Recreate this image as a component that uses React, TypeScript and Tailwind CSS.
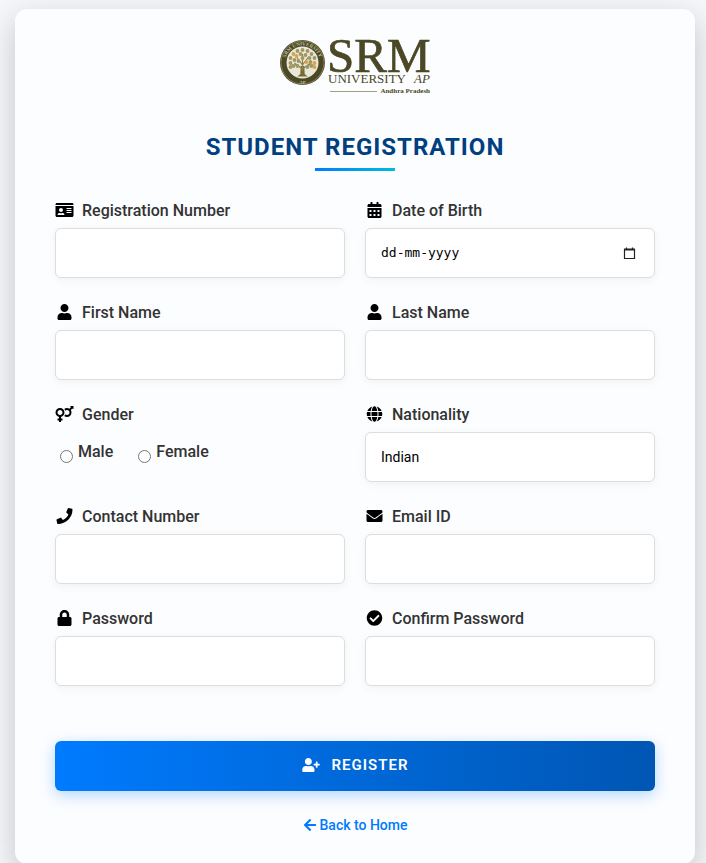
import { useId, type ComponentType, type InputHTMLAttributes } from "react";
import {
  FaArrowLeft,
  FaCalendarAlt,
  FaCheckCircle,
  FaEnvelope,
  FaGlobe,
  FaIdCard,
  FaLock,
  FaPhone,
  FaUser,
  FaUserPlus,
  FaVenusMars,
} from "react-icons/fa";

type Icon = ComponentType<{ className?: string }>;

const inputClass =
  "block h-[50px] w-full rounded-md border border-[#dddddd] bg-white px-[15px] text-sm font-normal text-black shadow-[0_2px_10px_rgba(0,0,0,0.05)] outline-none focus:border-[#007bff]";

const leaves = [
  [0, -13], [-5, -12], [5, -12], [-9, -9], [9, -9], [-12, -5], [12, -5], [-12, 0], [12, 0],
  [-9, 3], [9, 3], [-2, -9], [3, -8], [-6, -7], [7, -5], [-8, -3], [0, -5], [-4, -2], [4, -1],
  [8, -1], [-5, 3], [5, 4], [-12, 4], [12, 4],
];

function Logo() {
  return (
    <svg
      viewBox="0 0 152 60"
      className="h-[60px] w-[152px] overflow-visible"
      role="img"
      aria-label="SRM University AP, Andhra Pradesh"
    >
      <defs>
        <path id="seal-top" d="M5.5 26a17.5 17.5 0 0 1 35 0" />
      </defs>
      <circle cx="23.500" cy="24.500" r="22.500" fill="#4b4826" />
      <circle cx="23.500" cy="24.500" r="21.500" fill="none" stroke="#b9b38c" strokeWidth="0.500" />
      <circle cx="23.500" cy="24.500" r="16" fill="#e9e7d8" />
      <g transform="translate(.5 -1)" fill="#c5c09e" fontFamily="Liberation Serif, serif" fontWeight="700" fontSize="5">
        <text>
          <textPath href="#seal-top" startOffset="50%" textAnchor="middle">SRM UNIVERSITY</textPath>
        </text>
        <text x="23" y="46.500" textAnchor="middle">AP</text>
      </g>
      <g transform="translate(23.5 25)">
        <path d="M-1.800 3h3.600l.4 8 3 2.500h-10.400l3-2.500z" fill="#766b35" />
        <path d="M0 8V-9M0 6l-8-6M0 6l8-6M0 2l-6-8M0 2l6-8M-5 2h-6M5 2h6" fill="none" stroke="#8d8148" strokeWidth="1.200" />
        {leaves.map(([x, y], i) => (
          <circle key={i} cx={x} cy={y} r="1.900" fill={i % 5 === 3 ? "#d9a350" : "#a09863"} />
        ))}
      </g>
      <g fill="#4b4826" fontFamily="Liberation Serif, serif">
        <text x="48" y="34" fontSize="49" stroke="#4b4826" strokeWidth="0.700">SRM</text>
        <text x="49" y="45" fontSize="13">UNIVERSITY</text>
        <text x="151" y="45" fontSize="13" fontStyle="italic" textAnchor="end">AP</text>
        <text x="151" y="55" fontSize="7" fontWeight="700" textAnchor="end">Andhra Pradesh</text>
      </g>
      <path d="M51 53.500h47" stroke="#a09e88" strokeWidth="1" />
    </svg>
  );
}

function FieldCaption({ icon: Glyph, text }: { icon: Icon; text: string }) {
  return (
    <>
      <span className="mr-2 flex pb-0.5 text-black">
        <Glyph className="h-4 w-[19px]" />
      </span>
      {text}
    </>
  );
}

interface FieldProps extends InputHTMLAttributes<HTMLInputElement> {
  label: string;
  icon: Icon;
}

function Field({ label, icon, ...input }: FieldProps) {
  const id = useId();
  return (
    <div>
      <label htmlFor={id} className="mb-[5px] flex items-center leading-6">
        <FieldCaption icon={icon} text={label} />
      </label>
      <input id={id} className={inputClass} {...input} />
    </div>
  );
}

function DateField() {
  const id = useId();
  return (
    <div>
      <label htmlFor={id} className="mb-[5px] flex items-center leading-6">
        <FieldCaption icon={FaCalendarAlt} text="Date of Birth" />
      </label>
      <div className="flex h-[50px] items-center rounded-md border border-[#dddddd] bg-white px-[15px] shadow-[0_2px_10px_rgba(0,0,0,0.05)] focus-within:border-[#007bff]">
        <input
          id={id}
          type="text"
          placeholder="dd-mm-yyyy"
          className="min-w-0 flex-1 font-['DejaVu_Sans_Mono',monospace] text-[13px] font-normal text-black outline-none placeholder:text-black"
        />
        <button type="button" aria-label="Open calendar" className="mr-[3px]">
          <svg viewBox="0 0 13 13" className="size-[13px]" fill="none" stroke="#222222">
            <path d="M1.500 2.500h10v9h-10z" strokeWidth="1.200" />
            <path d="M1 2.500h11" strokeWidth="2" />
            <path d="M3.500 .5v2M9.500 .5v2" strokeWidth="1.200" />
          </svg>
        </button>
      </div>
    </div>
  );
}

function GenderField() {
  return (
    <fieldset>
      <legend className="mb-[5px] flex items-center leading-6">
        <FieldCaption icon={FaVenusMars} text="Gender" />
      </legend>
      <div className="flex gap-[25px] pt-2 pl-[5px]">
        {["Male", "Female"].map((name) => (
          <label key={name} className="flex items-start gap-[5px] leading-6">
            <input type="radio" name="gender" className="mt-2.5 size-[13px]" />
            {name}
          </label>
        ))}
      </div>
    </fieldset>
  );
}

export default function App() {
  return (
    <main className="min-h-screen overflow-hidden bg-[#f4f6fa] pt-[9px] pr-[11px] pl-[15px] font-[Roboto,sans-serif]">
      <section className="mx-auto max-w-[800px] rounded-xl bg-[#fcfdff] px-10 pt-[29px] pb-[27px] shadow-[0_10px_30px_rgba(0,0,0,0.2)]">
        <div className="flex justify-center">
          <Logo />
        </div>
        <h1 className="mt-[33px] text-center text-2xl leading-8 font-bold tracking-[1px] text-[#004080] uppercase">
          Student Registration
        </h1>
        <div className="mx-auto mt-[5px] h-[3px] w-20 bg-linear-to-r from-[#007bff] to-[#00bcd4]" />
        <form onSubmit={(event) => event.preventDefault()}>
          <div className="mt-7 grid grid-cols-2 gap-x-5 gap-y-[23px] font-medium text-[#333333]">
            <Field label="Registration Number" icon={FaIdCard} type="text" />
            <DateField />
            <Field label="First Name" icon={FaUser} type="text" />
            <Field label="Last Name" icon={FaUser} type="text" />
            <GenderField />
            <Field label="Nationality" icon={FaGlobe} type="text" defaultValue="Indian" />
            <Field label="Contact Number" icon={FaPhone} type="tel" />
            <Field label="Email ID" icon={FaEnvelope} type="email" />
            <Field label="Password" icon={FaLock} type="password" />
            <Field label="Confirm Password" icon={FaCheckCircle} type="password" />
          </div>
          <button
            type="submit"
            className="mt-[55px] flex h-[50px] w-full items-center justify-center gap-3 rounded-md bg-linear-to-r from-[#007bff] to-[#0056b3] pb-0.5 text-[15px] font-semibold tracking-[1px] text-white uppercase shadow-[0_4px_15px_rgba(0,123,255,0.3)]"
          >
            <FaUserPlus className="h-3.5 w-[18px]" />
            Register
          </button>
        </form>
        <div className="mt-6 text-center text-sm leading-5 font-medium text-[#007bff]">
          <a href="#home" className="inline-flex items-center gap-[3px]">
            <FaArrowLeft className="size-3.5" />
            Back to Home
          </a>
        </div>
      </section>
    </main>
  );
}
